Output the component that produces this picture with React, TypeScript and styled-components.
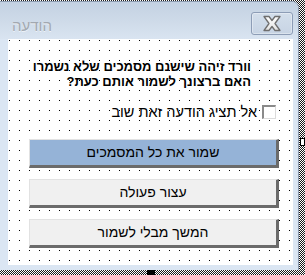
import styled, { createGlobalStyle } from "styled-components"

const GlobalStyle = createGlobalStyle`
    html, body {
        margin: 0;
        padding: 0;
        background: #fff;
    }
    body {
        width: 305px;
        height: 275px;
        overflow: hidden;
        font-family: "Liberation Sans", Arial, sans-serif;
    }
`

const Surface = styled.div`
    position: relative;
    width: 305px;
    height: 275px;
    box-sizing: border-box;
    padding: 1px 6px 5px 0;
    background: repeating-conic-gradient(#1a1a1a 0 25%, #fff 0 50%) 0 0 / 2px 2px;
`

const Handle = styled.div<{ $left: number; $top: number; $w: number; $h: number; $filled?: boolean }>`
    position: absolute;
    left: ${(p) => p.$left}px;
    top: ${(p) => p.$top}px;
    width: ${(p) => p.$w}px;
    height: ${(p) => p.$h}px;
    box-sizing: border-box;
    background: ${(p) => (p.$filled ? "#000" : "#fff")};
    border: 1px solid #000;
`

const Window = styled.div`
    height: 100%;
    box-sizing: border-box;
    display: flex;
    flex-direction: column;
    background: #dbe6f3;
    border-top: 1px solid #8c9cb2;
    border-right: 1px solid #8c9cb2;
    border-top-right-radius: 7px;
    overflow: hidden;
`

const TitleBar = styled.div`
    height: 37px;
    flex: none;
    box-sizing: border-box;
    display: flex;
    align-items: flex-start;
    justify-content: space-between;
    padding: 10px 5px 0 12px;
    background: linear-gradient(#c3d1e2, #cfdbe9 55%, #d9e4f1);
`

const Title = styled.span`
    margin-top: 6px;
    font-size: 15px;
    line-height: 16px;
    color: #a2a8b0;
    text-shadow: 0 1px 0 rgba(255, 255, 255, 0.6);
`

const CloseButton = styled.div`
    width: 42px;
    height: 23px;
    box-sizing: border-box;
    display: flex;
    align-items: center;
    justify-content: center;
    border: 1px solid #8d9db6;
    border-radius: 3px;
    background: linear-gradient(#d3deeb, #c7d4e4);
    box-shadow: inset 0 0 0 1px rgba(255, 255, 255, 0.35);
`

const Client = styled.div`
    flex: 1;
    margin: 0 5px 5px 8px;
    direction: rtl;
    display: flex;
    flex-direction: column;
    background-color: #fff;
    background-image: conic-gradient(at 1px 1px, transparent 75%, #000 0);
    background-size: 10px 10px;
    background-position: 1px 1px;
`

const Message = styled.div`
    margin-top: 20px;
    padding-right: 42px;
    font-size: 13px;
    line-height: 15px;
    font-weight: bold;
    color: #000;
    text-align: right;
`

const CheckRow = styled.label`
    margin-top: 16px;
    padding-right: 17px;
    display: flex;
    align-items: center;
    gap: 5px;
    font-size: 14.5px;
    line-height: 14px;
    color: #000;
`

const CheckBox = styled.span`
    width: 14px;
    height: 14px;
    flex: none;
    box-sizing: border-box;
    background: #fff;
    border-top: 2px solid #8a8a8a;
    border-left: 2px solid #8a8a8a;
    border-right: 1px solid #dcdcdc;
    border-bottom: 1px solid #dcdcdc;
`

const Buttons = styled.div`
    margin-top: 20px;
    display: flex;
    flex-direction: column;
    gap: 11px;
    margin-left: 21px;
    margin-right: 14px;
`

const Button = styled.div<{ $primary?: boolean }>`
    height: 29px;
    box-sizing: border-box;
    display: flex;
    align-items: center;
    justify-content: center;
    padding-bottom: 1px;
    background: ${(p) => (p.$primary ? "#95b3d7" : "#f0f0f0")};
    border-top: 1px solid #e2e2e2;
    border-right: 3px solid #6b6b6b;
    border-bottom: 3px solid #6b6b6b;
    border-left: 1px solid #e2e2e2;
    font-size: 14px;
    color: #000;
`

const CloseIcon = () => (
    <svg width="20" height="17" viewBox="0 0 20 17">
        <defs>
            <linearGradient id="xg" x1="0" y1="0" x2="0" y2="1">
                <stop offset="0" stopColor="#ffffff" />
                <stop offset="1" stopColor="#e2e2e2" />
            </linearGradient>
        </defs>
        <path
            d="M2 1.5 H7 L10 5.5 L13 1.5 H18 L13 8.5 L18 15.5 H13 L10 11.5 L7 15.5 H2 L7 8.5 Z"
            fill="url(#xg)"
            stroke="#6e6e6e"
            strokeWidth="1.3"
            strokeLinejoin="round"
        />
    </svg>
)

export default function App() {
    return (
        <>
            <GlobalStyle />
            <Surface>
                <Window>
                    <TitleBar>
                        <Title>הודעה</Title>
                        <CloseButton>
                            <CloseIcon />
                        </CloseButton>
                    </TitleBar>
                    <Client>
                        <Message>
                            וורד זיהה שישנם מסמכים שלא נשמרו
                            <br />
                            האם ברצונך לשמור אותם כעת?
                        </Message>
                        <CheckRow>
                            <CheckBox />
                            אל תציג הודעה זאת שוב
                        </CheckRow>
                        <Buttons>
                            <Button $primary>שמור את כל המסמכים</Button>
                            <Button>עצור פעולה</Button>
                            <Button>המשך מבלי לשמור</Button>
                        </Buttons>
                    </Client>
                </Window>
                <Handle $left={300} $top={138} $w={5} $h={8} />
                <Handle $left={147} $top={270} $w={8} $h={5} $filled />
            </Surface>
        </>
    )
}
